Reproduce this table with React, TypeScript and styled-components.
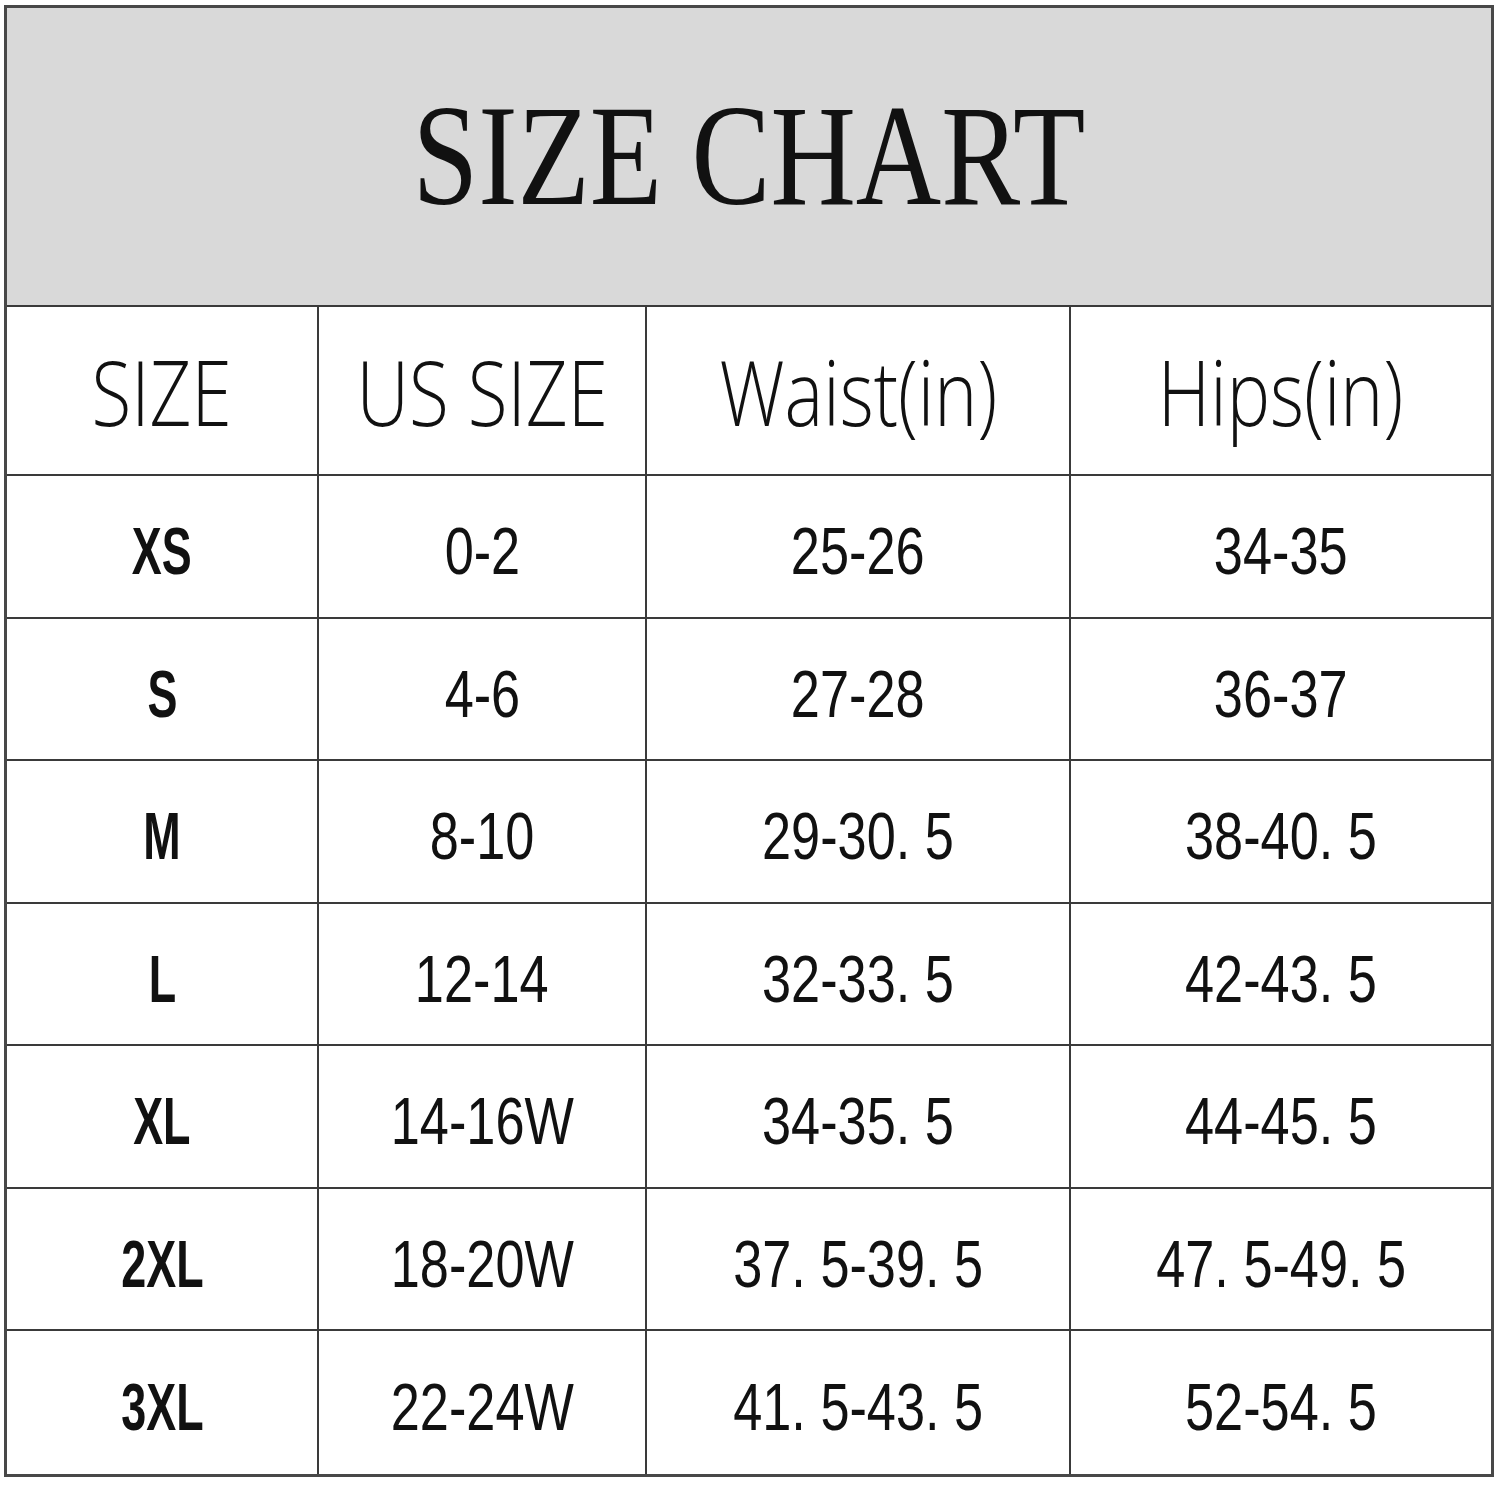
import React from "react";
import styled, { createGlobalStyle } from "styled-components";

const GlobalStyle = createGlobalStyle`
  html, body {
    margin: 0;
    padding: 0;
    background: #ffffff;
  }
  body {
    font-family: "Liberation Sans", Arial, sans-serif;
    color: #111;
  }
`;

const Chart = styled.div`
  box-sizing: border-box;
  width: 1490px;
  margin: 5px 0 0 4px;
  border: 3px solid #484848;
  background: #fff;
`;

const Banner = styled.div`
  box-sizing: border-box;
  height: 299px;
  background: #d9d9d9;
  border-bottom: 2px solid #3a3a3a;
  display: flex;
  align-items: center;
  justify-content: center;
`;

const Title = styled.h1`
  margin: 0;
  display: inline-block;
  font-family: "Liberation Serif", "Times New Roman", serif;
  font-weight: 400;
  font-size: 143px;
  line-height: 1;
  color: #111;
  transform: scaleX(0.827);
  white-space: nowrap;
`;

const Grid = styled.div`
  display: grid;
  grid-template-columns: 312px 328px 424px 1fr;
  grid-template-rows: 169px repeat(7, 142.5px);
`;

const Cell = styled.div<{ $lastCol: boolean; $lastRow: boolean }>`
  box-sizing: border-box;
  display: flex;
  align-items: center;
  justify-content: center;
  border-right: ${(p) => (p.$lastCol ? "none" : "2px solid #3a3a3a")};
  border-bottom: ${(p) => (p.$lastRow ? "none" : "2px solid #3a3a3a")};
  overflow: visible;
`;

const HeadText = styled.span`
  display: inline-block;
  font-family: "Open Sans", Lato, "Liberation Sans", sans-serif;
  font-weight: 300;
  font-size: 90px;
  line-height: 1;
  color: #111;
  white-space: nowrap;
  transform: scaleX(0.81);
`;

const DataText = styled.span<{ $bold: boolean }>`
  display: inline-block;
  padding-top: 9px;
  font-family: "Liberation Sans", Arial, sans-serif;
  font-weight: ${(p) => (p.$bold ? 700 : 400)};
  font-size: 67px;
  line-height: 1;
  color: #111;
  white-space: nowrap;
  transform: scaleX(${(p) => (p.$bold ? 0.67 : 0.78)});
`;

const headers = ["SIZE", "US SIZE", "Waist(in)", "Hips(in)"];

const rows: string[][] = [
  ["XS", "0-2", "25-26", "34-35"],
  ["S", "4-6", "27-28", "36-37"],
  ["M", "8-10", "29-30. 5", "38-40. 5"],
  ["L", "12-14", "32-33. 5", "42-43. 5"],
  ["XL", "14-16W", "34-35. 5", "44-45. 5"],
  ["2XL", "18-20W", "37. 5-39. 5", "47. 5-49. 5"],
  ["3XL", "22-24W", "41. 5-43. 5", "52-54. 5"],
];

export default function App() {
  return (
    <>
      <GlobalStyle />
      <Chart>
        <Banner>
          <Title>SIZE CHART</Title>
        </Banner>
        <Grid>
          {headers.map((h, i) => (
            <Cell key={h} $lastCol={i === 3} $lastRow={false}>
              <HeadText>{h}</HeadText>
            </Cell>
          ))}
          {rows.map((r, ri) =>
            r.map((v, ci) => (
              <Cell
                key={`${ri}-${ci}`}
                $lastCol={ci === 3}
                $lastRow={ri === rows.length - 1}
              >
                <DataText $bold={ci === 0}>{v}</DataText>
              </Cell>
            ))
          )}
        </Grid>
      </Chart>
    </>
  );
}
